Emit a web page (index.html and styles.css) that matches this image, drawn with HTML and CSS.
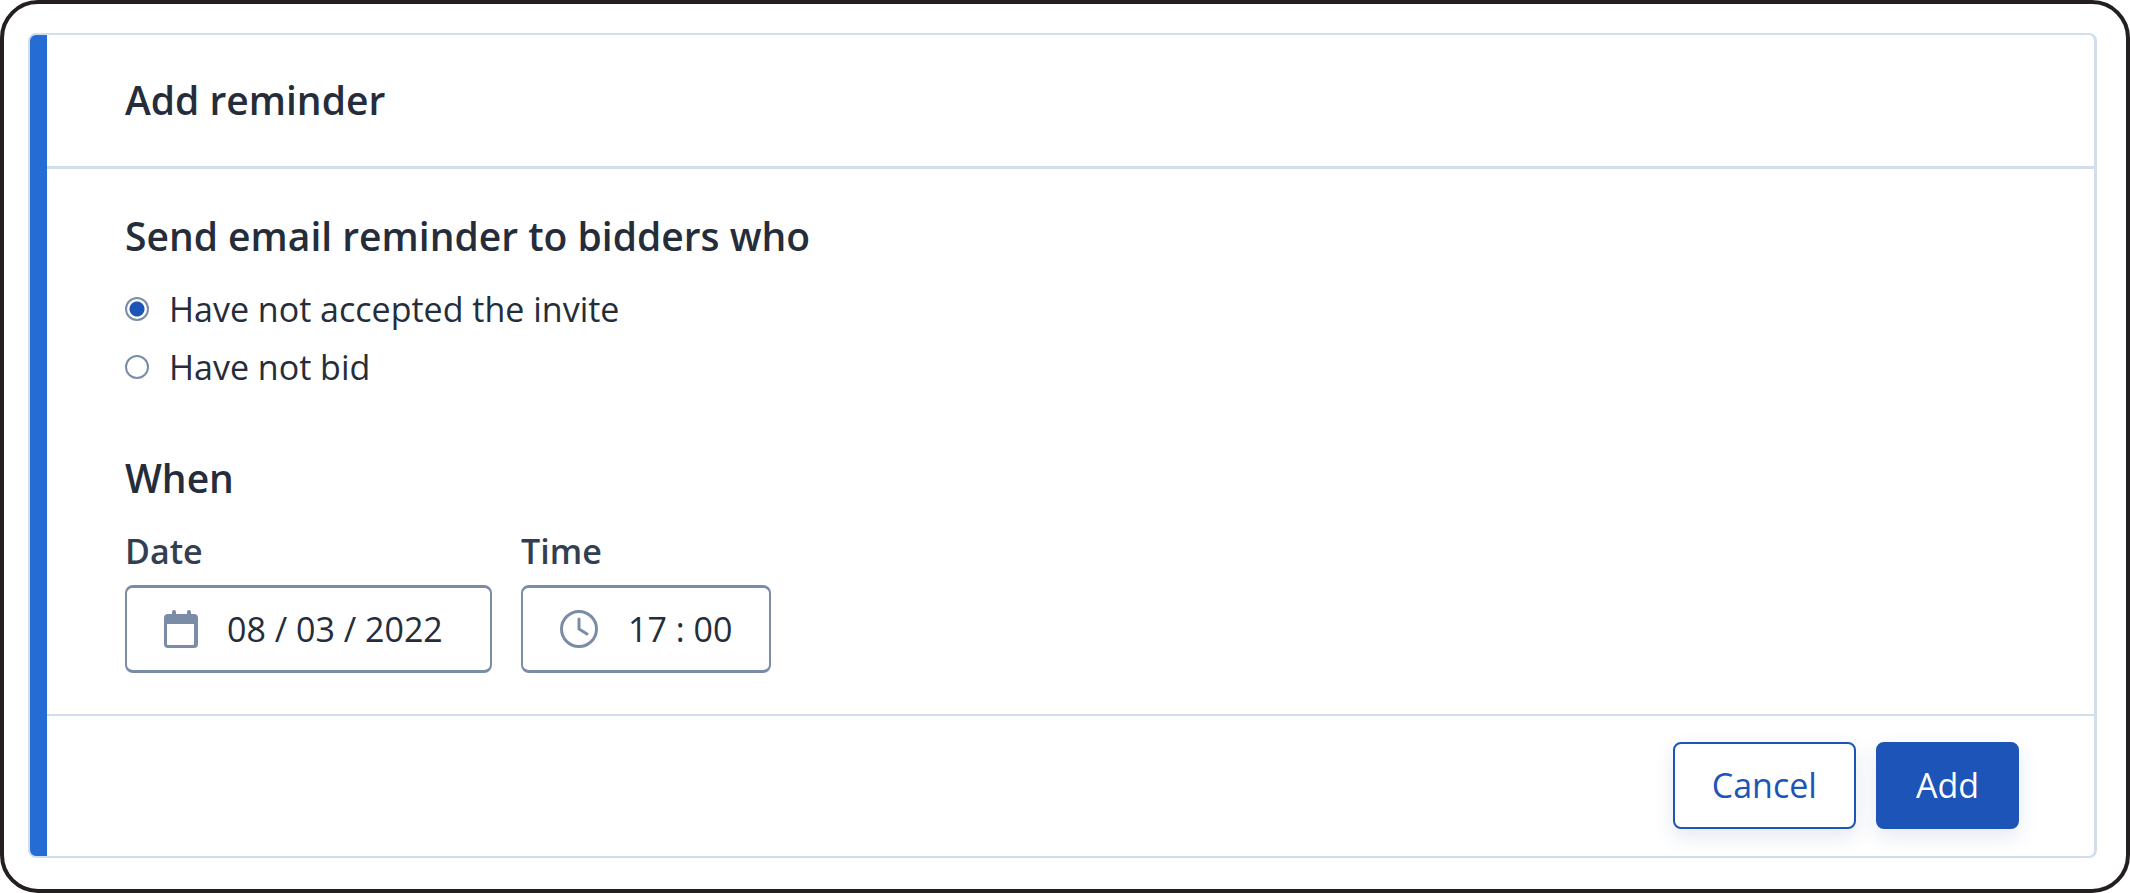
FILE: index.html
```html
<!DOCTYPE html>
<html lang="en">
<head>
<meta charset="utf-8">
<meta name="viewport" content="width=device-width, initial-scale=1">
<title>Add reminder</title>
<link rel="stylesheet" href="styles.css">
</head>
<body>
<main class="frame">
  <form class="card">
    <header class="card-header">
      <h1 class="heading">Add reminder</h1>
    </header>
    <div class="card-body">
      <fieldset class="group">
        <legend class="heading">Send email reminder to bidders who</legend>
        <div class="options">
          <label class="option"><input class="radio" type="radio" name="audience" checked>Have not accepted the invite</label>
          <label class="option"><input class="radio" type="radio" name="audience">Have not bid</label>
        </div>
      </fieldset>
      <fieldset class="group">
        <legend class="heading">When</legend>
        <div class="fields">
          <div class="field">
            <label class="field-label" for="date">Date</label>
            <div class="control">
              <svg class="icon" viewBox="0 0 38 38" aria-hidden="true">
                <path fill="currentColor" fill-rule="evenodd" d="M9 4V2a2 2 0 0 1 4 0V4h11V2a2 2 0 0 1 4 0V4h3a4 4 0 0 1 4 4v26a4 4 0 0 1-4 4H5a4 4 0 0 1-4-4V8a4 4 0 0 1 4-4zM4 14v20a1 1 0 0 0 1 1h25a1 1 0 0 0 1-1V14z"/>
              </svg>
              <input class="input input-date" id="date" type="text" value="08 / 03 / 2022">
            </div>
          </div>
          <div class="field">
            <label class="field-label" for="time">Time</label>
            <div class="control control-time">
              <svg class="icon" viewBox="0 0 38 38" fill="none" stroke="currentColor" stroke-width="3" stroke-linecap="round" stroke-linejoin="round" aria-hidden="true">
                <circle cx="19" cy="19" r="17.500"/>
                <path d="M19 9v10l8 5"/>
              </svg>
              <input class="input input-time" id="time" type="text" value="17 : 00">
            </div>
          </div>
        </div>
      </fieldset>
    </div>
    <footer class="card-footer">
      <button class="button" type="button">Cancel</button>
      <button class="button button-primary" type="submit">Add</button>
    </footer>
  </form>
</main>
</body>
</html>
```
FILE: styles.css
```css
* {
  box-sizing: border-box;
}

body {
  margin: 0;
  background: #fff;
  color: #252d3a;
  font-family: "Open Sans", "Noto Sans", sans-serif;
  font-size: 34px;
  line-height: 44px;
}

.frame {
  display: flex;
  min-height: 100vh;
  padding: 29px 29px 31px 24px;
  border: 4px solid #231f20;
  border-radius: 38px;
}

.card {
  display: flex;
  flex: 1;
  flex-direction: column;
  overflow: hidden;
  border: 2px solid #d3deec;
  border-right-width: 3px;
  border-radius: 8px;
  background: linear-gradient(#256dd4, #256dd4) left / 17px 100% no-repeat;
  padding-left: 17px;
}

.card-header {
  padding: 41px 78px 42px;
  border-bottom: 3px solid #d3deec;
}

.heading {
  margin: 0;
  padding: 0;
  font-size: 39px;
  font-weight: 600;
  line-height: 48px;
}

.card-body {
  display: flex;
  flex: 1;
  flex-direction: column;
  gap: 65px;
  padding: 43px 78px 38px;
}

.group {
  min-width: 0;
  margin: 0;
  padding: 0;
  border: 0;
}

.options {
  display: flex;
  flex-direction: column;
  gap: 14px;
  padding-top: 27px;
}

.option {
  display: flex;
  align-items: center;
  gap: 20px;
}

.radio {
  flex: none;
  width: 24px;
  height: 24px;
  margin: 0;
  appearance: none;
  border: 2px solid #7b8ca7;
  border-radius: 50%;
  background: #fff;
}

.radio:checked {
  background: radial-gradient(circle, #1c54b7 7px, #fff 8px);
}

.fields {
  display: flex;
  flex-wrap: wrap;
  gap: 29px;
  padding-top: 27px;
}

.field {
  display: flex;
  flex-direction: column;
  gap: 12px;
}

.field-label {
  color: #333f51;
  font-weight: 600;
}

.control {
  display: flex;
  align-items: center;
  gap: 26px;
  height: 88px;
  padding: 0 36px;
  border: 2px solid #7b8ca7;
  border-width: 3px 2px;
  border-radius: 8px;
}

.control-time {
  gap: 30px;
  padding: 0 35px 0 37px;
}

.icon {
  flex: none;
  width: 38px;
  height: 38px;
  color: #7b8ca7;
}

.input {
  padding: 0;
  border: 0;
  background: none;
  color: inherit;
  font: inherit;
  outline: 0;
}

.input-date {
  width: 227px;
}

.input-time {
  width: 106px;
}

.card-footer {
  display: flex;
  justify-content: flex-end;
  gap: 20px;
  padding: 26px 75px 27px 78px;
  border-top: 2px solid #d3deec;
}

.button {
  padding: 19px 37px 20px;
  border: 2px solid #1c54b7;
  border-radius: 8px;
  background: #fff;
  box-shadow: 0 8px 20px rgba(40, 70, 150, 0.12);
  color: #1c54b7;
  font: inherit;
}

.button-primary {
  padding: 19px 38px 20px;
  background: #1c54b7;
  color: #fff;
}
```
